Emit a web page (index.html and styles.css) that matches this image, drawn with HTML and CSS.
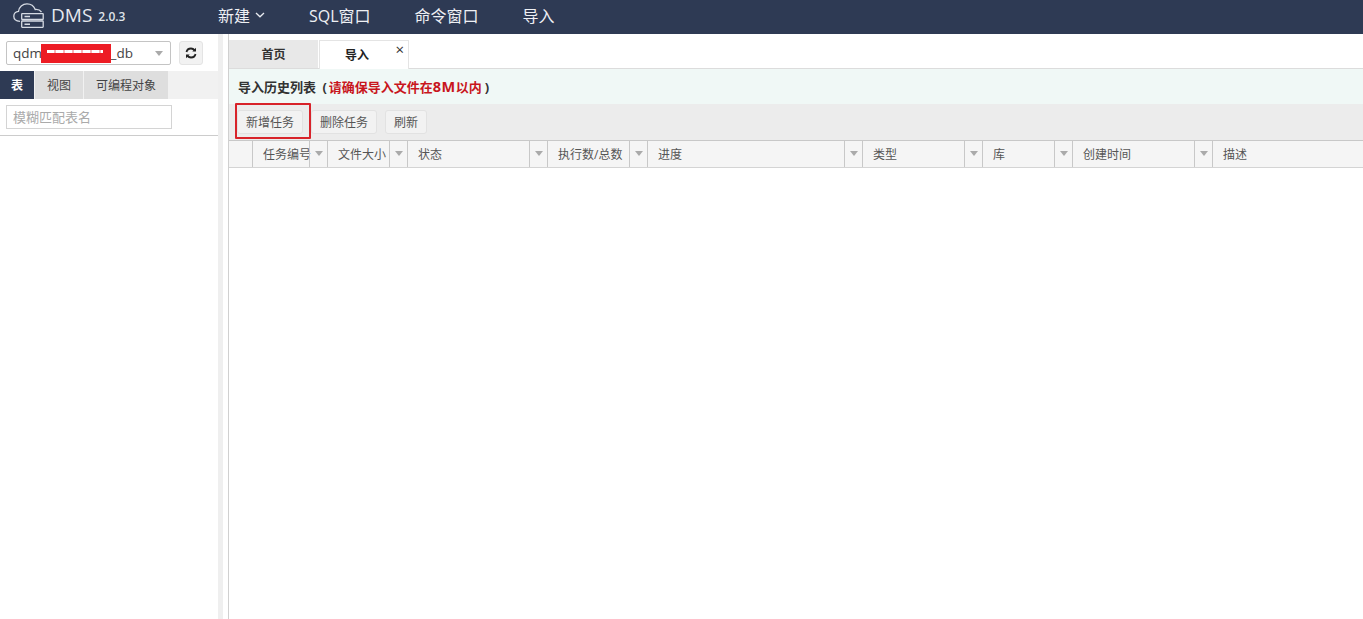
FILE: index.html
```html
<!DOCTYPE html>
<html lang="zh-CN">
<head>
<meta charset="utf-8">
<title>DMS</title>
<link rel="stylesheet" href="styles.css">
</head>
<body>
<header class="topbar">
  <div class="brand">
    <svg class="logo" width="31" height="25" viewBox="0 0 31 25" fill="none" stroke="#d5dae3" stroke-width="1.300">
      <path d="M7 18.300 C3 18 .8 16 .8 13.200 C.8 10.500 3 8.500 5.500 8.300 C6 4 9.500 .8 14 .8 C18 .8 21 3.200 22.200 6.500 C24.500 6.300 27 7 28.500 9"/>
      <rect x="8.700" y="10.700" width="21.500" height="5.800" rx=".5"/>
      <rect x="8.700" y="18" width="21.500" height="6.300" rx=".5"/>
      <path d="M11.500 13.600h5.500M11.500 21.200h5.500" stroke-width="1.500"/>
    </svg>
    <span class="brand-name">DMS</span>
    <span class="brand-ver">2.0.3</span>
  </div>
  <nav class="nav">
    <a class="nav-item nav-new">新建
      <svg width="10" height="6" viewBox="0 0 10 6" fill="none" stroke="#e8ebf0" stroke-width="1.300"><path d="M1 1l4 3.800L9 1"/></svg>
    </a>
    <a class="nav-item">SQL窗口</a>
    <a class="nav-item">命令窗口</a>
    <a class="nav-item">导入</a>
  </nav>
</header>
<div class="body">
  <aside class="side">
    <div class="db-row">
      <div class="db-select">
        <span class="db-name">qdm</span>
        <span class="redact"></span>
        <span class="db-name">_db</span>
        <span class="db-arrow"></span>
      </div>
      <button class="refresh" aria-label="刷新">
        <svg width="12" height="12" viewBox="0 0 12 12" fill="none" stroke="#222" stroke-width="1.800">
          <path d="M1.500 5 C2 2.500 4 1.500 6 1.500 C7.800 1.500 9 2.500 10 3.500"/>
          <path d="M10.500 7 C10 9.500 8 10.500 6 10.500 C4.200 10.500 3 9.500 2 8.500"/>
          <path d="M11 .8v3.700H7.300z" fill="#222" stroke="none"/>
          <path d="M1 11.200V7.500h3.700z" fill="#222" stroke="none"/>
        </svg>
      </button>
    </div>
    <div class="side-tabs">
      <span class="side-tab side-tab-on">表</span>
      <span class="side-tab side-tab-view">视图</span>
      <span class="side-tab side-tab-prog">可编程对象</span>
    </div>
    <div class="search-row">
      <input class="search" placeholder="模糊匹配表名">
    </div>
  </aside>
  <div class="splitter"></div>
  <main class="main">
    <div class="tabs">
      <span class="tab">首页</span>
      <span class="tab tab-on">导入<span class="tab-close">×</span></span>
    </div>
    <div class="notice">导入历史列表 <span class="paren">(</span><em class="warn">请确保导入文件在<span class="warn-num">8M</span>以内</em><span class="paren-end">)</span></div>
    <div class="toolbar">
      <button class="btn btn-add">新增任务<span class="highlight"></span></button>
      <button class="btn btn-del">删除任务</button>
      <button class="btn btn-ref">刷新</button>
    </div>
    <div class="thead">
      <div class="th"></div>
      <div class="th"><span class="th-label">任务编号</span><span class="trigger"></span></div>
      <div class="th"><span class="th-label">文件大小</span><span class="trigger"></span></div>
      <div class="th"><span class="th-label">状态</span><span class="trigger"></span></div>
      <div class="th"><span class="th-label">执行数/总数</span><span class="trigger"></span></div>
      <div class="th"><span class="th-label">进度</span><span class="trigger"></span></div>
      <div class="th"><span class="th-label">类型</span><span class="trigger"></span></div>
      <div class="th"><span class="th-label">库</span><span class="trigger"></span></div>
      <div class="th"><span class="th-label">创建时间</span><span class="trigger"></span></div>
      <div class="th"><span class="th-label">描述</span></div>
    </div>
  </main>
</div>
</body>
</html>
```
FILE: styles.css
```css
* { box-sizing: border-box; }
html, body { margin: 0; height: 100%; overflow: hidden; }
body {
  font-family: "Open Sans", "Liberation Sans", "Noto Sans CJK SC", sans-serif;
  font-size: 12px;
  color: #555;
  background: #fff;
  display: flex;
  flex-direction: column;
}
.topbar {
  height: 34px;
  flex: none;
  padding-bottom: 4px;
  background: #2e3a54;
  color: #eef0f4;
  display: flex;
  align-items: center;
}
.brand {
  width: 218px;
  display: flex;
  align-items: center;
  padding-left: 13px;
}
.brand-name { font-size: 19px; margin-left: 7px; color: #e6e9ef; }
.brand-ver { font-size: 12px; margin-left: 6px; margin-top: 3px; color: #dfe3ea; font-weight: 600; }
.nav { display: flex; font-size: 16px; align-items: center; }
.nav-item { color: #eef0f4; margin-right: 44px; white-space: nowrap; }
.nav-new { display: flex; align-items: center; gap: 5px; }
.body { flex: 1; display: flex; min-height: 0; }
.side { width: 218px; flex: none; }
.db-row { display: flex; align-items: center; height: 37px; padding: 1px 0 0 6px; }
.db-select {
  width: 165px;
  height: 24px;
  border: 1px solid #c4c4c4;
  border-radius: 2px;
  display: flex;
  align-items: center;
  padding-left: 6px;
  font-size: 13.500px;
  color: #444;
  position: relative;
}
.redact { width: 70px; height: 19px; background: #ed1c24; flex: none; margin-left: -1.500px; position: relative; }
.redact::after {
  content: "";
  position: absolute;
  left: 6px;
  top: 6px;
  width: 56px;
  height: 3px;
  background: repeating-linear-gradient(90deg, #fff 0 7px, #f7b5b7 7px 9px);
}
.db-arrow {
  position: absolute;
  right: 7px;
  top: 9px;
  border: 4.500px solid transparent;
  border-top: 5px solid #aaa;
  border-bottom: 0;
}
.refresh {
  width: 24px;
  height: 24px;
  margin-left: 8px;
  border: 1px solid #e4e4e4;
  border-radius: 3px;
  background: #f2f2f2;
  padding: 0;
  display: flex;
  align-items: center;
  justify-content: center;
}
.side-tabs { display: flex; height: 28px; background: #f1f1f1; }
.side-tab {
  display: flex;
  align-items: center;
  justify-content: center;
  background: #dedede;
  color: #444;
  margin-right: 1px;
  font-size: 12px;
}
.side-tab-on { width: 34px; background: #2e3a54; color: #fff; font-weight: 700; }
.side-tab-view { width: 48px; }
.side-tab-prog { width: 84px; }
.search-row { height: 37px; padding: 6px 0 0 6px; border-bottom: 1px solid #ccc; }
.search {
  display: block;
  width: 166px;
  height: 24px;
  border: 1px solid #d4d4d4;
  padding: 0 6px;
  font: inherit;
  font-size: 13px;
  outline: none;
}
.search::placeholder { color: #aaa; }
.splitter { width: 5px; flex: none; background: #efefef; }
.main { flex: 1; min-width: 0; margin-left: 5px; border-left: 1px solid #d0d0d0; display: flex; flex-direction: column; }
.tabs {
  height: 35px;
  flex: none;
  padding-top: 6px;
  display: flex;
  gap: 1px;
  border-bottom: 1px solid #dcdcdc;
  background: #fff;
}
.tab {
  width: 89px;
  display: flex;
  align-items: center;
  justify-content: center;
  background: #e8e8e8;
  color: #333;
  font-size: 12px;
  font-weight: 600;
  position: relative;
}
.tab-on {
  width: 90px;
  justify-content: flex-start;
  padding-left: 25px;
  background: #fff;
  border: 1px solid #e4e4e4;
  border-bottom: 0;
  margin-bottom: -1px;
  color: #222;
}
.tab-close { position: absolute; right: 4px; top: 0; font-size: 15px; font-weight: 400; color: #333; line-height: 16px; }
.notice {
  height: 35px;
  flex: none;
  background: #f0f8f6;
  display: flex;
  align-items: center;
  padding-left: 9px;
  font-size: 13px;
  font-weight: 700;
  color: #333;
  white-space: pre;
}
.paren { margin-left: 3px; margin-right: 2px; }
.paren-end { margin-left: 3px; }
.warn { font-style: normal; color: #c8161d; }
.warn-num { font-size: 14.500px; letter-spacing: .5px; }
.toolbar {
  height: 36px;
  flex: none;
  background: #ececec;
  display: flex;
  align-items: flex-start;
  gap: 8px;
  padding: 6px 0 0 8px;
}
.btn {
  height: 24px;
  border: 1px solid #e2e2e2;
  border-radius: 3px;
  background: #f2f2f2;
  color: #555;
  font: inherit;
  font-size: 12px;
  padding: 0;
  position: relative;
}
.btn-add { width: 66px; }
.btn-del { width: 66px; }
.btn-ref { width: 42px; }
.highlight {
  position: absolute;
  left: -3px;
  top: -8px;
  width: 76px;
  height: 36px;
  border: 2px solid #d8232a;
  border-radius: 1px;
}
.thead {
  height: 28px;
  flex: none;
  display: grid;
  grid-template-columns: 24px 75px 80px 140px 100px 215px 120px 90px 140px 1fr;
  background: #f5f5f5;
  border-top: 1px solid #c8c8c8;
  border-bottom: 1px solid #d4d4d4;
}
.th {
  display: flex;
  align-items: center;
  justify-content: space-between;
  border-right: 1px solid #c8c8c8;
  padding-left: 10px;
  min-width: 0;
  color: #555;
  white-space: nowrap;
  font-size: 12px;
}
.th:last-child { border-right: 0; }
.th-label { flex: 1; min-width: 0; }
.trigger {
  width: 18px;
  height: 100%;
  flex: none;
  border-left: 1px solid #c8c8c8;
  position: relative;
}
.trigger::after {
  content: "";
  position: absolute;
  left: 5px;
  top: 10px;
  border: 4.500px solid transparent;
  border-top: 5px solid #aaa;
  border-bottom: 0;
}
```
